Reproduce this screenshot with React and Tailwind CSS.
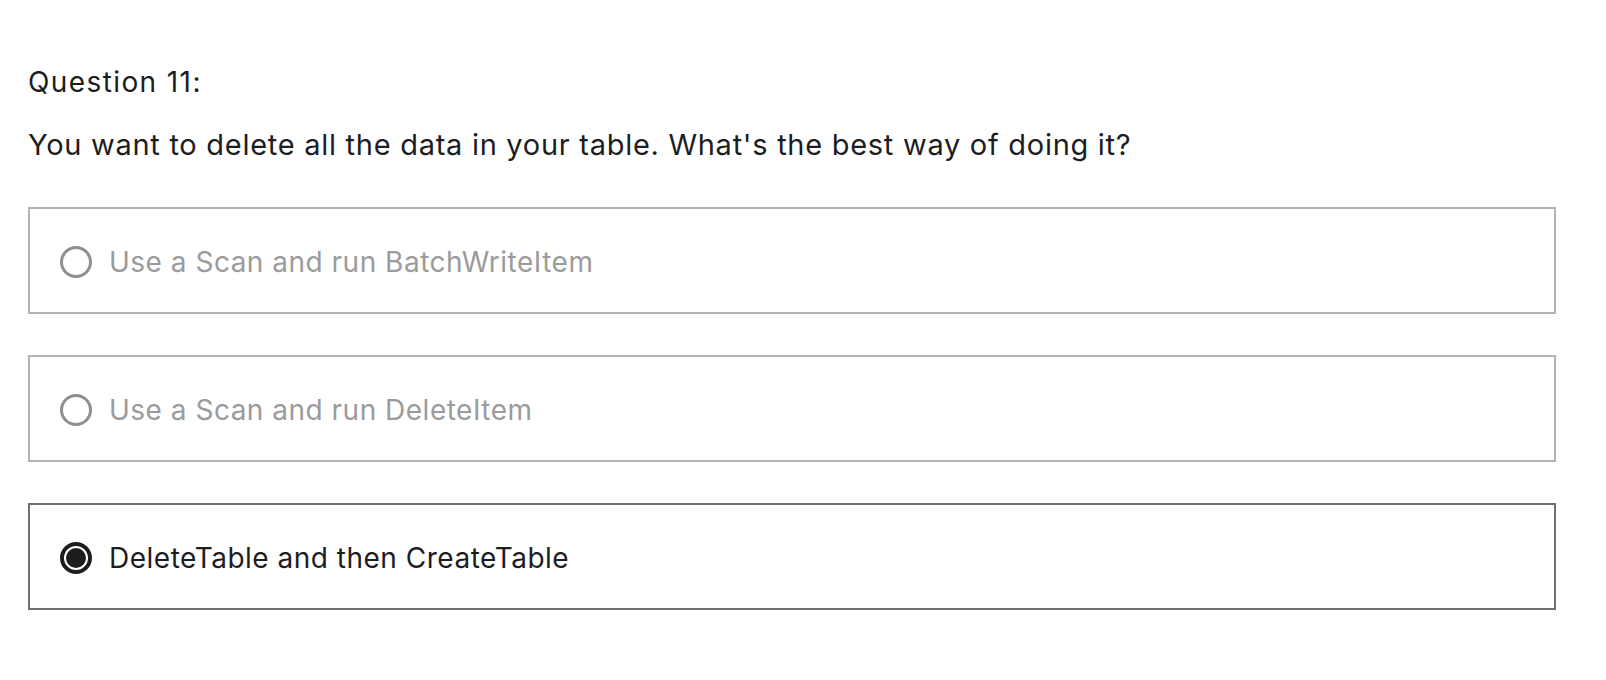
import { useState } from "react";

const options = [
  "Use a Scan and run BatchWriteItem",
  "Use a Scan and run DeleteItem",
  "DeleteTable and then CreateTable",
];

function Radio({ checked }) {
  if (checked) {
    return (
      <svg width="32" height="32" viewBox="0 0 32 32" className="shrink-0">
        <circle cx="16" cy="16" r="14" fill="none" stroke="#1d1d1f" strokeWidth="4" />
        <circle cx="16" cy="16" r="10" fill="#1d1d1f" />
      </svg>
    );
  }
  return (
    <svg width="32" height="32" viewBox="0 0 32 32" className="shrink-0">
      <circle cx="16" cy="16" r="14.5" fill="none" stroke="#8e8e8e" strokeWidth="3" />
    </svg>
  );
}

export default function App() {
  const [selected, setSelected] = useState(2);

  return (
    <div className="min-h-screen bg-white pl-[28px] pr-[50px] pt-[61px] font-['Inter',sans-serif] text-[28px] leading-[42px] text-[#1d1d1f]">
      <p className="tracking-[1.4px]">Question 11:</p>
      <p className="mt-[21px] text-[29px] tracking-[0.72px]">You want to delete all the data in your table. What's the best way of doing it?</p>

      <div className="mt-[41px] flex flex-col gap-[41px]">
        {options.map((opt, i) => {
          const isOn = selected === i;
          return (
            <button
              key={opt}
              onClick={() => setSelected(i)}
              className={`flex h-[107px] items-center border-2 pl-[30px] pt-[2px] text-left ${isOn ? "border-[#6c6f73] text-[#1d1d1f]" : "border-[#b3b3b3] text-[#9b9b9b]"}`}
            >
              <Radio checked={isOn} />
              <span className="ml-[17px] tracking-[0.5px]">{opt}</span>
            </button>
          );
        })}
      </div>
    </div>
  );
}
